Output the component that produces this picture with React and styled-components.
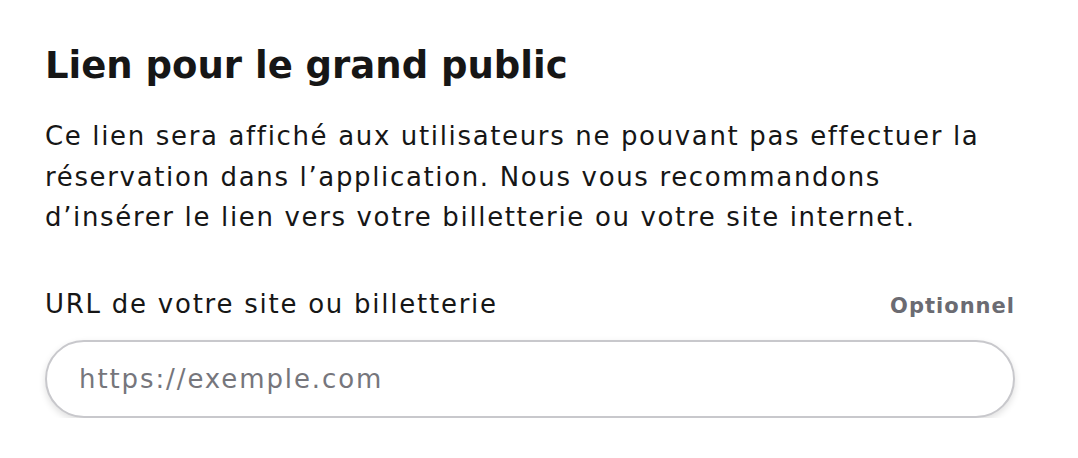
import React from "react";
import styled, { createGlobalStyle } from "styled-components";

const Global = createGlobalStyle`
  html, body { margin: 0; padding: 0; background: #ffffff; }
  body { font-family: "DejaVu Sans", "Noto Sans", sans-serif; color: #161616; }
`;

const Section = styled.section`
  width: 970px;
  padding: 40px 0 0 45px;
  display: flex;
  flex-direction: column;
`;

const Title = styled.h2`
  margin: 0;
  font-size: 37px;
  line-height: 52px;
  font-weight: 700;
  color: #161616;
`;

const Description = styled.p`
  margin: 24px 0 0;
  font-size: 26px;
  line-height: 40.5px;
  letter-spacing: 1.65px;
  font-weight: 400;
  color: #161616;
`;

const Field = styled.div`
  margin-top: 48px;
  display: flex;
  flex-direction: column;
  gap: 18px;
`;

const LabelRow = styled.div`
  display: flex;
  justify-content: space-between;
  align-items: baseline;
`;

const Label = styled.label`
  font-size: 26px;
  line-height: 36px;
  letter-spacing: 1.75px;
  color: #161616;
`;

const Optional = styled.span`
  font-size: 21px;
  font-weight: 700;
  letter-spacing: 1px;
  color: #6b6b72;
`;

const Input = styled.input`
  box-sizing: border-box;
  width: 970px;
  height: 78px;
  border: 2px solid #c8c8cc;
  border-radius: 39px;
  padding: 0 32px;
  font-family: inherit;
  font-size: 26px;
  letter-spacing: 1.9px;
  color: #161616;
  background: #fff;
  box-shadow: 0 3px 7px rgba(0, 0, 0, 0.13);
  outline: none;
  &::placeholder { color: #76767c; }
`;

export default function App() {
  return (
    <>
      <Global />
      <Section>
        <Title>Lien pour le grand public</Title>
        <Description>
          Ce lien sera affiché aux utilisateurs ne pouvant pas effectuer la
          <br />
          réservation dans l’application. Nous vous recommandons
          <br />
          d’insérer le lien vers votre billetterie ou votre site internet.
        </Description>
        <Field>
          <LabelRow>
            <Label htmlFor="url">URL de votre site ou billetterie</Label>
            <Optional>Optionnel</Optional>
          </LabelRow>
          <Input id="url" placeholder="https://exemple.com" />
        </Field>
      </Section>
    </>
  );
}
